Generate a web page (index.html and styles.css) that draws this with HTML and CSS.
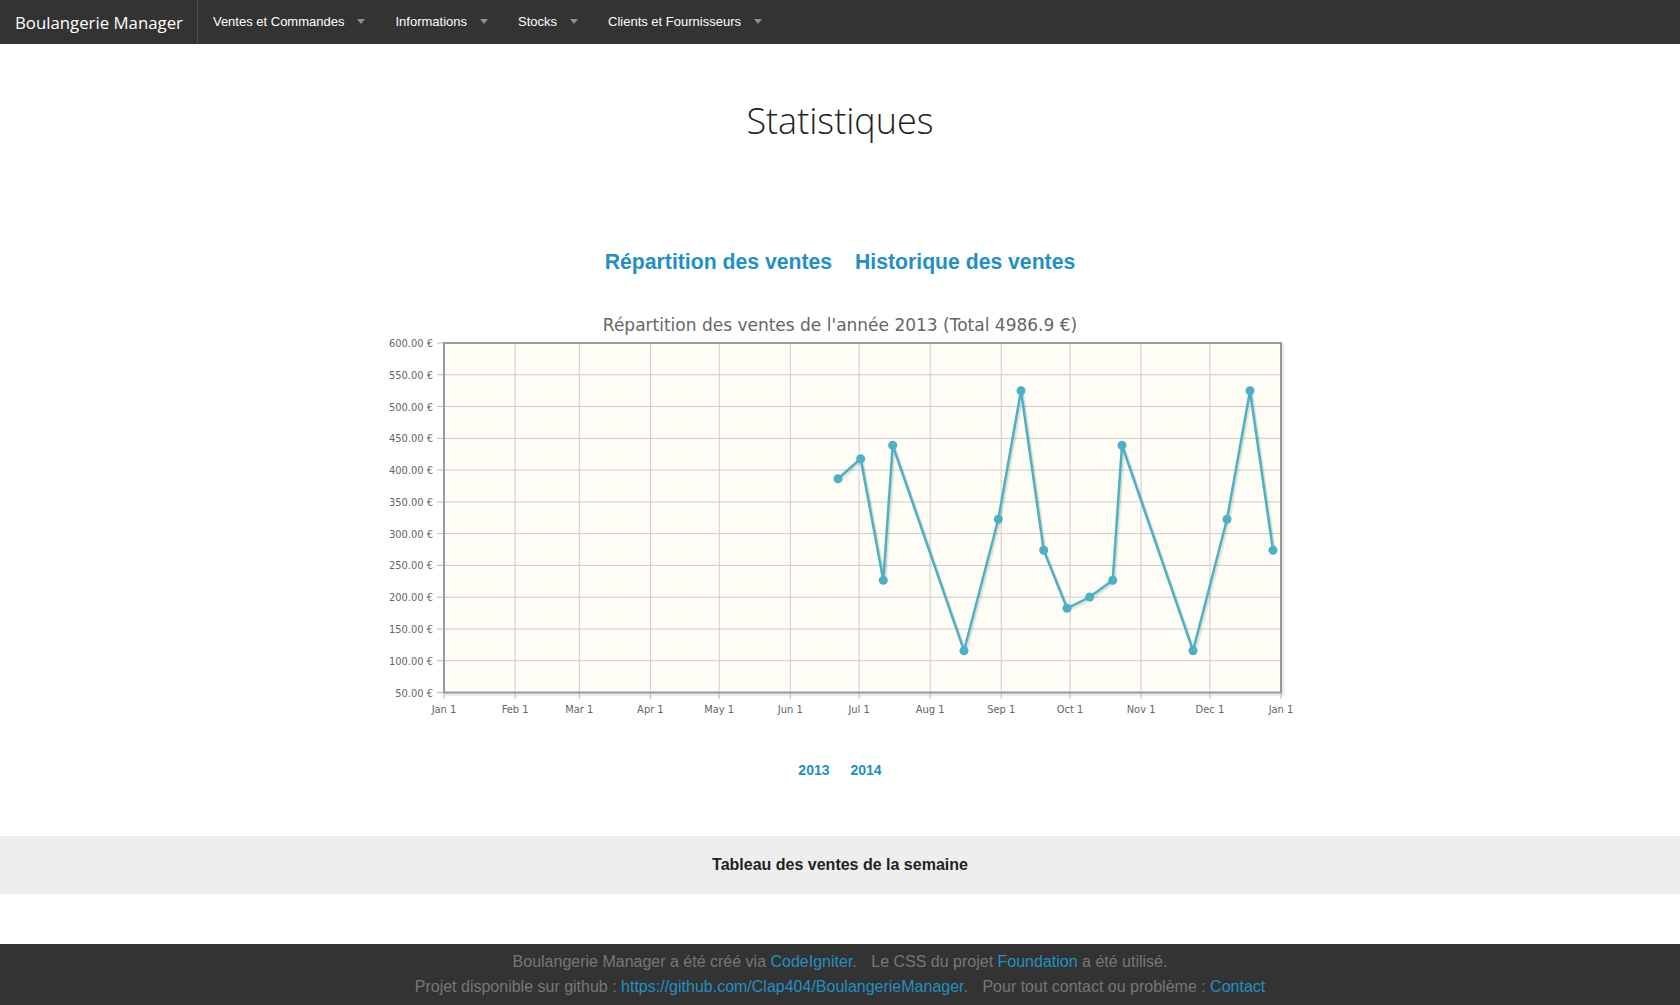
FILE: index.html
```html
<!DOCTYPE html>
<html lang="fr">
<head>
<meta charset="utf-8">
<title>Statistiques - Boulangerie Manager</title>
<link rel="stylesheet" href="styles.css">
</head>
<body>
<header class="topbar">
  <a class="brand" href="#">Boulangerie Manager</a>
  <ul class="menu">
    <li class="menu-item"><a href="#">Ventes et Commandes</a><span class="caret"></span></li>
    <li class="menu-item"><a href="#">Informations</a><span class="caret"></span></li>
    <li class="menu-item"><a href="#">Stocks</a><span class="caret"></span></li>
    <li class="menu-item"><a href="#">Clients et Fournisseurs</a><span class="caret"></span></li>
  </ul>
</header>

<main class="content">
  <h1 class="page-title">Statistiques</h1>

  <nav class="tabs">
    <a href="#">Répartition des ventes</a>
    <a href="#">Historique des ventes</a>
  </nav>

  <div class="chart-wrap">
    <svg class="chart" width="940" height="425" viewBox="0 0 940 425">
      <text class="chart-title" x="470" y="31" text-anchor="middle">Répartition des ventes de l'année 2013 (Total 4986.9 €)</text>
      <!-- plot shadow -->
      <rect x="76" y="45" width="837" height="349.5" fill="none" stroke="rgba(0,0,0,0.08)" stroke-width="3"/>
      <rect x="74" y="43" width="837" height="349.5" fill="#fffdf6"/>
      <g class="grid" stroke="#cccccc" stroke-width="1">
        <line x1="74" x2="911" y1="74.8" y2="74.8"/>
        <line x1="74" x2="911" y1="106.5" y2="106.5"/>
        <line x1="74" x2="911" y1="138.3" y2="138.3"/>
        <line x1="74" x2="911" y1="170.1" y2="170.1"/>
        <line x1="74" x2="911" y1="201.9" y2="201.9"/>
        <line x1="74" x2="911" y1="233.6" y2="233.6"/>
        <line x1="74" x2="911" y1="265.4" y2="265.4"/>
        <line x1="74" x2="911" y1="297.2" y2="297.2"/>
        <line x1="74" x2="911" y1="329" y2="329"/>
        <line x1="74" x2="911" y1="360.7" y2="360.7"/>
        <line y1="43" y2="392.5" x1="145.1" x2="145.1"/>
        <line y1="43" y2="392.5" x1="209.3" x2="209.3"/>
        <line y1="43" y2="392.5" x1="280.4" x2="280.4"/>
        <line y1="43" y2="392.5" x1="349.2" x2="349.2"/>
        <line y1="43" y2="392.5" x1="420.3" x2="420.3"/>
        <line y1="43" y2="392.5" x1="489.1" x2="489.1"/>
        <line y1="43" y2="392.5" x1="560.2" x2="560.2"/>
        <line y1="43" y2="392.5" x1="631.2" x2="631.2"/>
        <line y1="43" y2="392.5" x1="700" x2="700"/>
        <line y1="43" y2="392.5" x1="771.1" x2="771.1"/>
        <line y1="43" y2="392.5" x1="839.9" x2="839.9"/>
      </g>
      <g class="ticks" stroke="#bbbbbb" stroke-width="1">
        <line x1="67" x2="74" y1="43" y2="43"/>
        <line x1="67" x2="74" y1="74.8" y2="74.8"/>
        <line x1="67" x2="74" y1="106.5" y2="106.5"/>
        <line x1="67" x2="74" y1="138.3" y2="138.3"/>
        <line x1="67" x2="74" y1="170.1" y2="170.1"/>
        <line x1="67" x2="74" y1="201.9" y2="201.9"/>
        <line x1="67" x2="74" y1="233.6" y2="233.6"/>
        <line x1="67" x2="74" y1="265.4" y2="265.4"/>
        <line x1="67" x2="74" y1="297.2" y2="297.2"/>
        <line x1="67" x2="74" y1="329" y2="329"/>
        <line x1="67" x2="74" y1="360.7" y2="360.7"/>
        <line x1="67" x2="74" y1="392.5" y2="392.5"/>
        <line y1="392.5" y2="399" x1="74" x2="74"/>
        <line y1="392.5" y2="399" x1="145.1" x2="145.1"/>
        <line y1="392.5" y2="399" x1="209.3" x2="209.3"/>
        <line y1="392.5" y2="399" x1="280.4" x2="280.4"/>
        <line y1="392.5" y2="399" x1="349.2" x2="349.2"/>
        <line y1="392.5" y2="399" x1="420.3" x2="420.3"/>
        <line y1="392.5" y2="399" x1="489.1" x2="489.1"/>
        <line y1="392.5" y2="399" x1="560.2" x2="560.2"/>
        <line y1="392.5" y2="399" x1="631.2" x2="631.2"/>
        <line y1="392.5" y2="399" x1="700" x2="700"/>
        <line y1="392.5" y2="399" x1="771.1" x2="771.1"/>
        <line y1="392.5" y2="399" x1="839.9" x2="839.9"/>
        <line y1="392.5" y2="399" x1="911" x2="911"/>
      </g>
      <rect x="74" y="43" width="837" height="349.5" fill="none" stroke="#999999" stroke-width="2"/>
      <g class="ylabels" text-anchor="end">
        <text x="63" y="47">600.00 €</text>
        <text x="63" y="78.8">550.00 €</text>
        <text x="63" y="110.5">500.00 €</text>
        <text x="63" y="142.3">450.00 €</text>
        <text x="63" y="174.1">400.00 €</text>
        <text x="63" y="205.9">350.00 €</text>
        <text x="63" y="237.6">300.00 €</text>
        <text x="63" y="269.4">250.00 €</text>
        <text x="63" y="301.2">200.00 €</text>
        <text x="63" y="333">150.00 €</text>
        <text x="63" y="364.7">100.00 €</text>
        <text x="63" y="396.5">50.00 €</text>
      </g>
      <g class="xlabels" text-anchor="middle">
        <text x="74" y="413">Jan 1</text>
        <text x="145.1" y="413">Feb 1</text>
        <text x="209.3" y="413">Mar 1</text>
        <text x="280.4" y="413">Apr 1</text>
        <text x="349.2" y="413">May 1</text>
        <text x="420.3" y="413">Jun 1</text>
        <text x="489.1" y="413">Jul 1</text>
        <text x="560.2" y="413">Aug 1</text>
        <text x="631.2" y="413">Sep 1</text>
        <text x="700" y="413">Oct 1</text>
        <text x="771.1" y="413">Nov 1</text>
        <text x="839.9" y="413">Dec 1</text>
        <text x="911" y="413">Jan 1</text>
      </g>
      <g class="series-shadow" fill="none" stroke-linejoin="round">
        <polyline transform="translate(2.4 2.4)" stroke="rgba(0,0,0,0.06)" stroke-width="2.5" points="468,178.7 490.7,158.7 513.3,280.3 522.7,145.3 594,350.7 628.3,219.3 651,90.7 673.7,250.3 697,308.3 719.7,297 742.7,280.3 752,145.3 823,350.7 857,219.3 880,90.7 903,250.3"/>
        <polyline transform="translate(1.2 1.2)" stroke="rgba(0,0,0,0.09)" stroke-width="2.5" points="468,178.7 490.7,158.7 513.3,280.3 522.7,145.3 594,350.7 628.3,219.3 651,90.7 673.7,250.3 697,308.3 719.7,297 742.7,280.3 752,145.3 823,350.7 857,219.3 880,90.7 903,250.3"/>
      </g>
      <polyline class="series" fill="none" stroke="#4bb2c5" stroke-width="2.5" stroke-linejoin="round" points="468,178.7 490.7,158.7 513.3,280.3 522.7,145.3 594,350.7 628.3,219.3 651,90.7 673.7,250.3 697,308.3 719.7,297 742.7,280.3 752,145.3 823,350.7 857,219.3 880,90.7 903,250.3"/>
      <g class="markers" fill="#4bb2c5">
        <circle cx="468" cy="178.7" r="4.5"/>
        <circle cx="490.7" cy="158.7" r="4.5"/>
        <circle cx="513.3" cy="280.3" r="4.5"/>
        <circle cx="522.7" cy="145.3" r="4.5"/>
        <circle cx="594" cy="350.7" r="4.5"/>
        <circle cx="628.3" cy="219.3" r="4.5"/>
        <circle cx="651" cy="90.7" r="4.5"/>
        <circle cx="673.7" cy="250.3" r="4.5"/>
        <circle cx="697" cy="308.3" r="4.5"/>
        <circle cx="719.7" cy="297" r="4.5"/>
        <circle cx="742.7" cy="280.3" r="4.5"/>
        <circle cx="752" cy="145.3" r="4.5"/>
        <circle cx="823" cy="350.7" r="4.5"/>
        <circle cx="857" cy="219.3" r="4.5"/>
        <circle cx="880" cy="90.7" r="4.5"/>
        <circle cx="903" cy="250.3" r="4.5"/>
      </g>
    </svg>
  </div>

  <nav class="years">
    <a href="#">2013</a>
    <a href="#">2014</a>
  </nav>

  <section class="band">
    <h3 class="band-title">Tableau des ventes de la semaine</h3>
  </section>
</main>

<footer class="footer">
  <p>Boulangerie Manager a été créé via <a href="#">CodeIgniter</a>. <span class="sep"></span>Le CSS du projet <a href="#">Foundation</a> a été utilisé.</p>
  <p>Projet disponible sur github : <a href="#">https://github.com/Clap404/BoulangerieManager</a>. <span class="sep"></span>Pour tout contact ou problème : <a href="#">Contact</a></p>
</footer>
</body>
</html>
```

FILE: styles.css
```css
* { box-sizing: border-box; }

html, body {
  margin: 0;
  padding: 0;
  background: #ffffff;
  font-family: "Liberation Sans", Arial, sans-serif;
  color: #222222;
}

a { text-decoration: none; }

/* Top bar */
.topbar {
  display: flex;
  align-items: stretch;
  height: 44px;
  background: #333333;
}

.brand {
  display: flex;
  align-items: center;
  padding: 0 14px 0 15px;
  font-family: "Open Sans", sans-serif;
  font-size: 16.8px;
  color: #ffffff;
  border-right: 1px solid #4e4e4e;
}

.menu {
  display: flex;
  margin: 0;
  padding: 0;
  list-style: none;
}

.menu-item {
  display: flex;
  align-items: center;
  padding: 0 15px 2px;
  gap: 13px;
}

.menu-item a {
  color: #ffffff;
  font-size: 13px;
  font-family: "Liberation Sans", Arial, sans-serif;
}

.caret {
  width: 0;
  height: 0;
  border-left: 4px solid transparent;
  border-right: 4px solid transparent;
  border-top: 5px solid rgba(255, 255, 255, 0.45);
  margin-top: 1px;
}

/* Main */
.content {
  display: flex;
  flex-direction: column;
  align-items: center;
}

.page-title {
  margin: 55px 0 0;
  font-family: "Open Sans", sans-serif;
  font-weight: 300;
  font-size: 36px;
  line-height: 44px;
  color: #222222;
}

.tabs {
  display: flex;
  gap: 23px;
  margin-top: 106px;
  line-height: 26px;
}

.tabs a {
  font-size: 21.2px;
  font-weight: bold;
  color: #2190c4;
}

.chart-wrap {
  margin-top: 25px;
  width: 940px;
}

.chart {
  display: block;
}

.chart-title {
  font-family: "DejaVu Sans", sans-serif;
  font-size: 17px;
  fill: #666666;
}

.ylabels text,
.xlabels text {
  font-family: "DejaVu Sans Condensed", "DejaVu Sans", sans-serif;
  font-size: 11px;
  fill: #666666;
}

.years {
  display: flex;
  gap: 21px;
  margin-top: 35px;
  line-height: 20px;
}

.years a {
  font-size: 14px;
  font-weight: bold;
  color: #2190c4;
}

.band {
  align-self: stretch;
  margin-top: 56px;
  height: 58px;
  background: #eeeeee;
  display: flex;
  align-items: center;
  justify-content: center;
}

.band-title {
  margin: 0;
  font-size: 16px;
  font-weight: bold;
  color: #222222;
}

/* Footer */
.footer {
  margin-top: 50px;
  background: #333333;
  padding: 5px 0 6px;
  text-align: center;
  color: #777777;
  font-size: 16px;
  line-height: 25px;
}

.footer p {
  margin: 0;
}

.footer a {
  color: #2190c4;
}

.sep {
  display: inline-block;
  width: 10px;
}
```
